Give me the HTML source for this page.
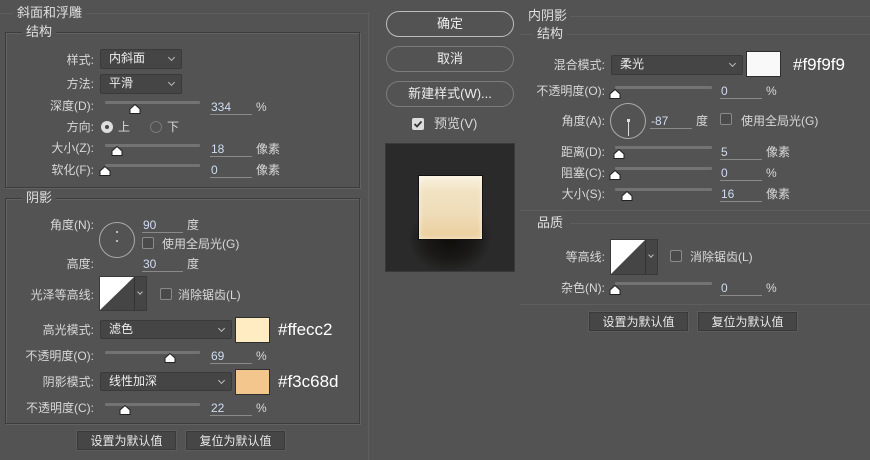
<!DOCTYPE html>
<html><head><meta charset="utf-8">
<style>
*{margin:0;padding:0;box-sizing:border-box}
body{width:870px;height:460px;background:#535353;overflow:hidden;position:relative;font-family:"Liberation Sans","Noto Sans CJK SC",sans-serif;font-size:12px;color:#d8d8d8}
.a{position:absolute}
.l{position:absolute;text-align:right;line-height:14px;white-space:nowrap}
.t{position:absolute;line-height:14px;white-space:nowrap}
.hl{position:absolute;height:1px;background:#3e3e3e;border-bottom:1px solid #5e5e5e}
.box{position:absolute;border:1px solid #3c3c3c;box-shadow:1px 1px 0 #626262 inset,1px 1px 0 #626262}
.ttl{position:absolute;background:#535353;padding:0 4px;line-height:14px;font-size:13px;color:#e0e0e0}
.dd{position:absolute;background:#454545;border:1px solid #3a3a3a;border-radius:2px;line-height:16px;padding-left:8px;color:#eee}
.dd:after{content:"";position:absolute;right:7px;top:5px;width:4px;height:4px;border-right:1px solid #bbb;border-bottom:1px solid #bbb;transform:rotate(45deg)}
.tr{position:absolute;height:3px;background:#737373;border-radius:1px}
.th{position:absolute;width:12px;height:10px}
.in{position:absolute;border-bottom:1px solid #8a8a8a;color:#cfdcf2;line-height:14px;padding-left:1px}
.cb{position:absolute;width:12px;height:12px;border:1px solid #8a8a8a;border-radius:2px;background:#4a4a4a}
.btn{position:absolute;border:1px solid #3a3a3a;background:#464646;color:#e8e8e8;text-align:center;line-height:18px;box-shadow:0 0 0 1px #5c5c5c}
.rb{position:absolute;border:1px solid #7c7c7c;border-radius:13px;text-align:center;color:#eee;line-height:23px;font-size:13px}
</style></head><body>
<!-- LEFT -->
<div class="hl" style="left:0;top:13px;width:370px"></div>
<div class="a" style="left:368px;top:13px;width:1px;height:447px;background:#3c3c3c;border-right:1px solid #5e5e5e"></div>
<div class="ttl" style="left:13px;top:6px">斜面和浮雕</div>
<div class="box" style="left:5px;top:32px;width:355px;height:156px"></div>
<div class="ttl" style="left:22px;top:25px">结构</div>
<div class="box" style="left:5px;top:198px;width:355px;height:226px"></div>
<div class="ttl" style="left:22px;top:191px">阴影</div>

<svg width="0" height="0" style="position:absolute"><defs><symbol id="thumb" viewBox="0 0 12 10"><path d="M6 0.5 L11 5 L11 9.5 L1 9.5 L1 5 Z" fill="#fff" stroke="#222" stroke-width="1"/></symbol></defs></svg>

<div class="l" style="right:776px;top:53px">样式:</div>
<div class="dd" style="left:100px;top:49px;width:82px;height:20px">内斜面</div>
<div class="l" style="right:776px;top:77px">方法:</div>
<div class="dd" style="left:100px;top:74px;width:82px;height:20px">平滑</div>

<div class="l" style="right:776px;top:99px">深度(D):</div>
<div class="tr" style="left:105px;top:101px;width:95px"></div>
<svg class="th" style="left:129px;top:104px"><use href="#thumb"/></svg>
<div class="in" style="left:210px;top:100px;width:42px">334</div><div class="t" style="left:256px;top:100px">%</div>

<div class="l" style="right:776px;top:120px">方向:</div>
<div class="a" style="left:101px;top:121px;width:12px;height:12px;border-radius:50%;background:#ddd"></div>
<div class="a" style="left:105px;top:125px;width:4px;height:4px;border-radius:50%;background:#444"></div>
<div class="t" style="left:118px;top:120px">上</div>
<div class="a" style="left:150px;top:121px;width:12px;height:12px;border-radius:50%;border:1px solid #777"></div>
<div class="t" style="left:167px;top:120px">下</div>

<div class="l" style="right:776px;top:141px">大小(Z):</div>
<div class="tr" style="left:105px;top:144px;width:95px"></div>
<svg class="th" style="left:111px;top:146px"><use href="#thumb"/></svg>
<div class="in" style="left:210px;top:142px;width:42px">18</div><div class="t" style="left:256px;top:142px">像素</div>

<div class="l" style="right:776px;top:163px">软化(F):</div>
<div class="tr" style="left:105px;top:164px;width:95px"></div>
<svg class="th" style="left:99px;top:166px"><use href="#thumb"/></svg>
<div class="in" style="left:210px;top:163px;width:42px">0</div><div class="t" style="left:256px;top:163px">像素</div>

<div class="l" style="right:776px;top:218px">角度(N):</div>
<div class="a" style="left:99px;top:222px;width:36px;height:36px;border-radius:50%;border:1px solid #aaa"></div>
<div class="a" style="left:116px;top:231px;width:2px;height:2px;background:#bbb"></div>
<div class="a" style="left:116px;top:240px;width:2px;height:2px;background:#bbb"></div>
<div class="in" style="left:142px;top:218px;width:41px">90</div><div class="t" style="left:187px;top:218px">度</div>
<div class="cb" style="left:142px;top:237px"></div><div class="t" style="left:162px;top:237px">使用全局光(G)</div>
<div class="l" style="right:776px;top:257px">高度:</div>
<div class="in" style="left:142px;top:257px;width:41px">30</div><div class="t" style="left:187px;top:257px">度</div>

<div class="l" style="right:776px;top:288px">光泽等高线:</div>
<div class="a" style="left:99px;top:276px;width:48px;height:35px;border:1px solid #3a3a3a;background:#454545"></div>
<svg class="a" style="left:100px;top:277px" width="34" height="33"><path d="M0 0H34L0 33Z" fill="#fff"/></svg>
<div class="a" style="left:134px;top:277px;width:1px;height:33px;background:#333"></div>
<div class="a" style="left:138px;top:290px;width:4px;height:4px;border-right:1px solid #bbb;border-bottom:1px solid #bbb;transform:rotate(45deg)"></div>
<div class="cb" style="left:160px;top:288px"></div><div class="t" style="left:178px;top:288px">消除锯齿(L)</div>

<div class="l" style="right:776px;top:323px">高光模式:</div>
<div class="dd" style="left:100px;top:320px;width:132px;height:19px">滤色</div>
<div class="a" style="left:235px;top:317px;width:35px;height:26px;background:#ffecc2;border:1px solid #2e2e2e"></div>
<div class="t" style="left:278px;top:321px;font-size:17px;color:#fff;line-height:18px">#ffecc2</div>
<div class="l" style="right:776px;top:349px">不透明度(O):</div>
<div class="tr" style="left:105px;top:351px;width:95px"></div>
<svg class="th" style="left:164px;top:353px"><use href="#thumb"/></svg>
<div class="in" style="left:210px;top:349px;width:42px">69</div><div class="t" style="left:256px;top:349px">%</div>

<div class="l" style="right:776px;top:375px">阴影模式:</div>
<div class="dd" style="left:100px;top:372px;width:132px;height:19px">线性加深</div>
<div class="a" style="left:235px;top:369px;width:35px;height:26px;background:#f3c68d;border:1px solid #2e2e2e"></div>
<div class="t" style="left:278px;top:373px;font-size:17px;color:#fff;line-height:18px">#f3c68d</div>
<div class="l" style="right:776px;top:401px">不透明度(C):</div>
<div class="tr" style="left:105px;top:403px;width:95px"></div>
<svg class="th" style="left:119px;top:405px"><use href="#thumb"/></svg>
<div class="in" style="left:210px;top:401px;width:42px">22</div><div class="t" style="left:256px;top:401px">%</div>

<div class="btn" style="left:77px;top:431px;width:99px;height:19px">设置为默认值</div>
<div class="btn" style="left:186px;top:431px;width:99px;height:19px">复位为默认值</div>

<!-- MIDDLE -->
<div class="rb" style="left:386px;top:11px;width:128px;height:26px;border-color:#bcbcbc">确定</div>
<div class="rb" style="left:386px;top:46px;width:128px;height:26px">取消</div>
<div class="rb" style="left:386px;top:81px;width:128px;height:26px">新建样式(W)...</div>
<div class="a" style="left:412px;top:118px;width:12px;height:12px;background:#ddd;border-radius:2px"></div>
<svg class="a" style="left:412px;top:118px" width="12" height="12"><path d="M2.5 6 L5 8.5 L9.5 3.5" stroke="#333" stroke-width="1.8" fill="none"/></svg>
<div class="t" style="left:434px;top:117px;font-size:13px">预览(V)</div>
<div class="a" style="left:385px;top:143px;width:130px;height:129px;background:#2a2a2a;border:1px solid #3a3a3a;overflow:hidden">
  <div class="a" style="left:22px;top:60px;width:84px;height:70px;background:radial-gradient(ellipse at center,#0e0d0a 0%,rgba(14,13,10,0.6) 40%,rgba(42,42,42,0) 70%)"></div>
  <div class="a" style="left:32px;top:31px;width:65px;height:65px;background:linear-gradient(#faf2df 0%,#f1e2c3 25%,#efdcb8 60%,#ebcd9c 100%);border:1px solid #111;box-shadow:inset 0 0 6px rgba(255,250,235,0.8)"></div>
</div>

<!-- RIGHT -->
<div class="hl" style="left:570px;top:16px;width:300px"></div>
<div class="t" style="left:528px;top:9px;font-size:13px;color:#e0e0e0">内阴影</div>
<div class="hl" style="left:520px;top:34px;width:350px"></div>
<div class="ttl" style="left:533px;top:27px">结构</div>

<div class="l" style="right:265px;top:58px">混合模式:</div>
<div class="dd" style="left:611px;top:55px;width:132px;height:20px">柔光</div>
<div class="a" style="left:746px;top:51px;width:35px;height:26px;background:#f9f9f9;border:1px solid #2e2e2e"></div>
<div class="t" style="left:793px;top:56px;font-size:17px;color:#fff;line-height:18px">#f9f9f9</div>

<div class="l" style="right:265px;top:84px">不透明度(O):</div>
<div class="tr" style="left:615px;top:86px;width:97px"></div>
<svg class="th" style="left:609px;top:89px"><use href="#thumb"/></svg>
<div class="in" style="left:720px;top:84px;width:42px">0</div><div class="t" style="left:766px;top:84px">%</div>

<div class="l" style="right:265px;top:114px">角度(A):</div>
<div class="a" style="left:610px;top:103px;width:36px;height:36px;border-radius:50%;border:1px solid #aaa"></div>
<div class="a" style="left:628px;top:120px;width:1px;height:16px;background:#ddd"></div>
<div class="a" style="left:627px;top:119px;width:3px;height:3px;background:#ddd"></div>
<div class="in" style="left:650px;top:114px;width:42px">-87</div><div class="t" style="left:696px;top:114px">度</div>
<div class="cb" style="left:720px;top:113px"></div><div class="t" style="left:741px;top:114px">使用全局光(G)</div>

<div class="l" style="right:265px;top:145px">距离(D):</div>
<div class="tr" style="left:615px;top:146px;width:97px"></div>
<svg class="th" style="left:613px;top:149px"><use href="#thumb"/></svg>
<div class="in" style="left:720px;top:145px;width:42px">5</div><div class="t" style="left:766px;top:145px">像素</div>

<div class="l" style="right:265px;top:166px">阻塞(C):</div>
<div class="tr" style="left:615px;top:167px;width:97px"></div>
<svg class="th" style="left:609px;top:170px"><use href="#thumb"/></svg>
<div class="in" style="left:720px;top:166px;width:42px">0</div><div class="t" style="left:766px;top:166px">%</div>

<div class="l" style="right:265px;top:187px">大小(S):</div>
<div class="tr" style="left:615px;top:188px;width:97px"></div>
<svg class="th" style="left:621px;top:191px"><use href="#thumb"/></svg>
<div class="in" style="left:720px;top:187px;width:42px">16</div><div class="t" style="left:766px;top:187px">像素</div>

<div class="hl" style="left:520px;top:210px;width:350px"></div>
<div class="hl" style="left:570px;top:223px;width:300px"></div>
<div class="t" style="left:537px;top:216px;font-size:13px;color:#e0e0e0">品质</div>

<div class="l" style="right:265px;top:250px">等高线:</div>
<div class="a" style="left:610px;top:239px;width:48px;height:36px;border:1px solid #3a3a3a;background:#454545"></div>
<svg class="a" style="left:611px;top:240px" width="34" height="34"><path d="M0 0H34L0 34Z" fill="#fff"/></svg>
<div class="a" style="left:645px;top:240px;width:1px;height:34px;background:#333"></div>
<div class="a" style="left:649px;top:253px;width:4px;height:4px;border-right:1px solid #bbb;border-bottom:1px solid #bbb;transform:rotate(45deg)"></div>
<div class="cb" style="left:670px;top:250px"></div><div class="t" style="left:690px;top:250px">消除锯齿(L)</div>

<div class="l" style="right:265px;top:281px">杂色(N):</div>
<div class="tr" style="left:615px;top:282px;width:97px"></div>
<svg class="th" style="left:609px;top:285px"><use href="#thumb"/></svg>
<div class="in" style="left:720px;top:281px;width:42px">0</div><div class="t" style="left:766px;top:281px">%</div>

<div class="hl" style="left:520px;top:304px;width:350px"></div>
<div class="btn" style="left:589px;top:312px;width:99px;height:19px">设置为默认值</div>
<div class="btn" style="left:698px;top:312px;width:99px;height:19px">复位为默认值</div>
</body></html>
